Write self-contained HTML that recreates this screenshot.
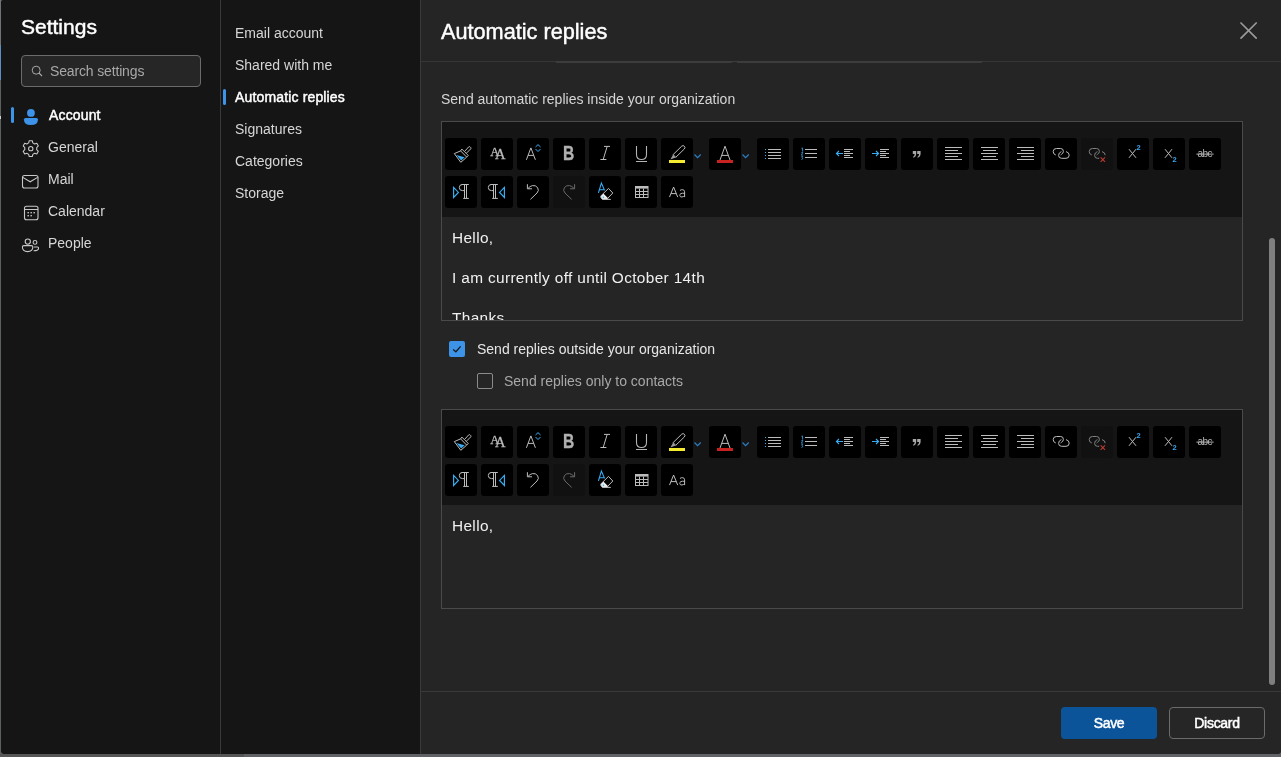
<!DOCTYPE html>
<html><head><meta charset="utf-8">
<style>
*{box-sizing:border-box;margin:0;padding:0}
html,body{width:1281px;height:757px;overflow:hidden;background:#5a5a5a;font-family:"Liberation Sans",sans-serif;}
.abs{position:absolute}
svg{position:absolute;left:0;top:0;display:block}
#dlg{will-change:transform;position:absolute;left:1px;top:0;width:1280px;height:754px;background:#151515;border-radius:3px 0 4px 4px;overflow:hidden}
#nav1{position:absolute;left:0;top:0;width:219px;height:754px;background:#151515}
#div1{position:absolute;left:219px;top:0;width:1px;height:754px;background:#3a3a3a}
#nav2{position:absolute;left:220px;top:0;width:199px;height:754px;background:#151515}
#div2{position:absolute;left:419px;top:0;width:1px;height:754px;background:#3a3a3a}
#content{position:absolute;left:420px;top:0;width:860px;height:754px;background:#252525}
.t{position:absolute;white-space:nowrap;line-height:1}
.sb{-webkit-text-stroke:0.45px currentColor}
.lt{position:absolute;white-space:nowrap;line-height:1}
.nv{position:absolute;white-space:nowrap;line-height:1;font-size:14px;color:#d6d6d6}
.nico{position:absolute}
.ed{position:absolute;left:20px;width:802px;height:200px;border:1px solid #4a4a4a;background:#252525;overflow:hidden}
.tb{position:absolute;left:0;top:0;width:800px;height:95px;background:#151515}
.btn{position:absolute;width:32px;height:32px;background:#000;border-radius:3px;overflow:hidden}
.btn.dis{background:#111}
.chev{position:absolute;width:8px;height:6px}
.body{position:absolute;left:10px;font-size:15.4px;letter-spacing:0.35px;color:#f0f0f0;white-space:nowrap;line-height:1}
.cb{position:absolute;width:16px;height:16px;border-radius:2px}
.btnf{position:absolute;top:707px;width:96px;height:32px;border-radius:4px;font-size:14px;-webkit-text-stroke:0.5px currentColor;letter-spacing:-0.3px;color:#fff;text-align:center;line-height:32px}
</style></head><body>
<div class="abs" style="left:0;top:0;width:1px;height:757px;background:#5c5e60"></div><div class="abs" style="left:0;top:0;width:1px;height:45px;background:#6f7377"></div>
<div class="abs" style="left:0;top:45px;width:1px;height:35px;background:#5a8fc2"></div>
<div class="abs" style="left:0;top:116px;width:1px;height:3px;background:#d0d0d0"></div>
<div class="abs" style="left:0;top:754px;width:244px;height:3px;background:#565656"></div>
<div class="abs" style="left:244px;top:754px;width:1037px;height:3px;background:#606265"></div>
<div id="dlg">
  <div id="nav1">
    <div class="t sb" style="left:20px;top:16px;font-size:21px;color:#fff">Settings</div>
    <div class="abs" style="left:20px;top:55px;width:180px;height:32px;border:1px solid #6b6b6b;border-radius:4px;background:#262626"></div>
    <svg class="nico" style="left:29.5px;top:64.7px" width="12" height="12" viewBox="0 0 12 12"><circle cx="5.2" cy="5.2" r="4" fill="none" stroke="#a8a8a8" stroke-width="1"/><path d="M8 8 L11 11" stroke="#a8a8a8" stroke-width="1.1"/></svg>
    <div class="t" style="left:49px;top:64px;font-size:14px;letter-spacing:-0.15px;color:#a8a8a8">Search settings</div>
    <div class="abs" style="left:10px;top:107px;width:3px;height:16px;background:#3d93e8;border-radius:2px"></div>
    <svg class="nico" style="left:19.8px;top:108px" width="20" height="18" viewBox="0 0 20 18"><circle cx="9.95" cy="4.95" r="3.9" fill="#3d93e8"/><path d="M2.9 11.6 Q2.9 10 4.5 10 H15.4 Q17 10 17 11.6 Q17 17.1 9.95 17.1 Q2.9 17.1 2.9 11.6 Z" fill="#3d93e8"/></svg>
    <div class="t sb" style="left:48px;top:108px;font-size:14px;letter-spacing:0.15px;color:#fff">Account</div>
    <svg class="nico" style="left:19.5px;top:139px" width="19.5" height="19.5" viewBox="0 0 18 18"><path d="M7.6 1.6 H10.4 L10.9 3.6 L12.6 4.6 L14.6 4 L16 6.4 L14.5 7.9 V9.9 L16 11.4 L14.6 13.8 L12.6 13.2 L10.9 14.2 L10.4 16.2 H7.6 L7.1 14.2 L5.4 13.2 L3.4 13.8 L2 11.4 L3.5 9.9 V7.9 L2 6.4 L3.4 4 L5.4 4.6 L7.1 3.6 Z" fill="none" stroke="#c8c8c8" stroke-width="1" stroke-linejoin="round"/><circle cx="9" cy="8.9" r="2" fill="none" stroke="#c8c8c8" stroke-width="1"/></svg>
    <div class="nv" style="left:47px;top:140px">General</div>
    <svg class="nico" style="left:20px;top:174px" width="18" height="15" viewBox="0 0 18 15"><rect x="1.5" y="1.5" width="15.5" height="12.5" rx="2" fill="none" stroke="#c8c8c8" stroke-width="1.1"/><path d="M1.8 3.4 L9.2 7.8 L16.6 3.4" fill="none" stroke="#c8c8c8" stroke-width="1.1"/></svg>
    <div class="nv" style="left:47px;top:172px">Mail</div>
    <svg class="nico" style="left:21.6px;top:205px" width="16" height="16" viewBox="0 0 16 16"><rect x="1.5" y="1.3" width="13.5" height="13.5" rx="2" fill="none" stroke="#c8c8c8" stroke-width="1.1"/><rect x="1.5" y="4" width="13.5" height="1" fill="#c8c8c8"/><g fill="#c8c8c8"><rect x="4.5" y="7" width="1.4" height="1.4"/><rect x="7.5" y="7" width="1.4" height="1.4"/><rect x="10.5" y="7" width="1.4" height="1.4"/><rect x="4.5" y="10" width="1.4" height="1.4"/><rect x="7.5" y="10" width="1.4" height="1.4"/></g></svg>
    <div class="nv" style="left:47px;top:204px">Calendar</div>
    <svg class="nico" style="left:20px;top:237px" width="19" height="16" viewBox="0 0 19 16"><circle cx="6.8" cy="4.6" r="2.6" fill="none" stroke="#c8c8c8" stroke-width="1.1"/><circle cx="14" cy="5.4" r="1.9" fill="none" stroke="#c8c8c8" stroke-width="1.1"/><path d="M1.4 10 Q1.4 8.6 2.8 8.6 H10.4 Q11.8 8.6 11.8 10 Q11.8 14.6 6.6 14.6 Q1.4 14.6 1.4 10 Z" fill="none" stroke="#c8c8c8" stroke-width="1.1"/><path d="M12.6 13.8 Q17.6 13.8 17.6 11 Q17.6 10 16.6 10 H12.8" fill="none" stroke="#c8c8c8" stroke-width="1.1"/></svg>
    <div class="nv" style="left:47px;top:236px">People</div>
  </div>
  <div id="div1"></div>
  <div id="nav2">
    <div class="nv" style="left:14px;top:26px">Email account</div>
    <div class="nv" style="left:14px;top:58px">Shared with me</div>
    <div class="abs" style="left:2px;top:89px;width:3px;height:16px;background:#3d93e8;border-radius:2px"></div>
    <div class="t sb" style="left:14px;top:90px;font-size:14px;letter-spacing:0.15px;color:#fff">Automatic replies</div>
    <div class="nv" style="left:14px;top:122px">Signatures</div>
    <div class="nv" style="left:14px;top:154px">Categories</div>
    <div class="nv" style="left:14px;top:186px">Storage</div>
  </div>
  <div id="div2"></div>
  <div id="content">
    <div class="t sb" style="left:20px;top:21px;font-size:21.7px;color:#fff">Automatic replies</div>
    <svg class="nico" style="left:817px;top:19.5px" width="20" height="20" viewBox="0 0 20 20"><path d="M3 3 L18.2 18.2 M18.2 3 L3 18.2" stroke="#9a9a9a" stroke-width="1.7" stroke-linecap="round"/></svg>
    <div class="abs" style="left:0;top:61px;width:860px;height:1px;background:#363636"></div><div class="abs" style="left:135px;top:61px;width:426px;height:2px;background:#3c3c3c"></div><div class="abs" style="left:311px;top:62px;width:5px;height:1px;background:#262626"></div>
    <div class="t" style="left:20px;top:92px;font-size:14px;color:#d6d6d6">Send automatic replies inside your organization</div>

    <div class="ed" style="top:121px">
      <div class="tb"><div class="btn" style="left:3px;top:16px"><svg width="32" height="32" viewBox="0 0 32 32">
<g fill="none" stroke="#bcbcbc" stroke-width="1" stroke-linejoin="round">
<path d="M19.6 13.4 L23.7 8.9 Q24.4 8.3 25.1 8.9 L25.7 9.5 Q26.3 10.2 25.7 10.9 L21.4 15.2"/>
<path d="M15.6 12.9 L16.9 11.1 L23.2 17.4 L21.7 19.1 Z"/>
<path d="M15.6 12.9 L9.3 15.6 L15.8 24.3 L21.7 19.1"/>
</g>
<path d="M11.3 17.1 L19.6 19.3 L16.2 22.4 Z" fill="#38abf2"/>
</svg></div><div class="btn" style="left:39px;top:16px"><span class="lt" style="left:9.2px;top:7.6px;font-size:12.5px;font-family:'Liberation Serif',serif;color:#bcbcbc;-webkit-text-stroke:0.3px #bcbcbc">A</span><span class="lt" style="left:13.9px;top:9.4px;font-size:14.6px;font-family:'Liberation Serif',serif;color:#bcbcbc;-webkit-text-stroke:0.3px #bcbcbc">A</span></div><div class="btn" style="left:75px;top:16px"><svg width="32" height="32" viewBox="0 0 32 32"><path d="M9.4 21.8 L13.9 9.9 L18.4 21.8 M11.1 17.4 H16.7" fill="none" stroke="#bcbcbc" stroke-width="1"/><path d="M18.5 9 L21 6.6 L23.5 9 M18.5 11 L21 13.5 L23.5 11" fill="none" stroke="#38abf2" stroke-width="1"/></svg></div><div class="btn" style="left:111px;top:16px"><span class="lt" style="left:10.4px;top:6.2px;font-size:19.5px;font-weight:bold;color:#b0b0b0;-webkit-text-stroke:0.35px #b0b0b0;transform:scaleX(0.8);transform-origin:left top">B</span></div><div class="btn" style="left:147px;top:16px"><svg width="32" height="32" viewBox="0 0 32 32"><path d="M15 8.4 H21 M11.4 21.5 H17.4 M18.2 8.4 L14.2 21.5" fill="none" stroke="#bcbcbc" stroke-width="1"/></svg></div><div class="btn" style="left:183px;top:16px"><svg width="32" height="32" viewBox="0 0 32 32"><path d="M11.5 8 V16.5 Q11.5 21.5 16.5 21.5 Q21.5 21.5 21.5 16.5 V8" fill="none" stroke="#b4b4b4" stroke-width="1.1"/><rect x="11" y="23" width="11" height="1" fill="#b4b4b4"/></svg></div><div class="btn" style="left:219px;top:16px"><svg width="32" height="32" viewBox="0 0 32 32">
<path d="M12.1 16.6 L20.7 8.2 A1.9 1.9 0 0 1 23.3 11 L14.7 19.4 Z" fill="none" stroke="#bcbcbc" stroke-width="1"/>
<path d="M12.1 16.6 L9.4 21.4 L14.7 19.4 Z" fill="#9a9a9a"/>
<rect x="8" y="22" width="16" height="3" fill="#f5ec2f"/>
</svg></div><div class="chev" style="left:252px;top:31.7px"><svg width="8" height="6" viewBox="0 0 8 6"><path d="M0.5 0.5 L3.6 3.6 L6.7 0.5" fill="none" stroke="#2f80c8" stroke-width="1.1"/></svg></div><div class="btn" style="left:267px;top:16px"><svg width="32" height="32" viewBox="0 0 32 32"><path d="M11 22 L16 8.2 L21 22 M12.6 17.4 H19.4" fill="none" stroke="#bcbcbc" stroke-width="1"/><rect x="8" y="22" width="16" height="3" fill="#c8221e"/></svg></div><div class="chev" style="left:300px;top:31.7px"><svg width="8" height="6" viewBox="0 0 8 6"><path d="M0.5 0.5 L3.6 3.6 L6.7 0.5" fill="none" stroke="#2f80c8" stroke-width="1.1"/></svg></div><div class="btn" style="left:315px;top:16px"><svg width="32" height="32" viewBox="0 0 32 32"><rect x="8" y="11" width="1" height="1" fill="#38abf2"/><rect x="8" y="14" width="1" height="1" fill="#38abf2"/><rect x="8" y="17" width="1" height="1" fill="#38abf2"/><rect x="8" y="20" width="1" height="1" fill="#38abf2"/><rect x="11" y="11" width="13" height="1" fill="#bcbcbc"/><rect x="11" y="14" width="13" height="1" fill="#bcbcbc"/><rect x="11" y="17" width="13" height="1" fill="#bcbcbc"/><rect x="11" y="20" width="13" height="1" fill="#bcbcbc"/></svg></div><div class="btn" style="left:351px;top:16px"><svg width="32" height="32" viewBox="0 0 32 32"><path d="M8.4 10.3 L9.6 10 V13.5 M8.4 14.4 H9.8 L8.4 17.2 H9.8 M8.4 18.6 H9.8 L9 19.8 L9.8 20.6 L8.4 21.6" fill="none" stroke="#38abf2" stroke-width="0.8"/><rect x="12" y="11" width="12" height="1" fill="#bcbcbc"/><rect x="12" y="15" width="12" height="1" fill="#bcbcbc"/><rect x="12" y="19" width="12" height="1" fill="#bcbcbc"/></svg></div><div class="btn" style="left:387px;top:16px"><svg width="32" height="32" viewBox="0 0 32 32"><path d="M14 15.5 H7.6 M10 13 L7.4 15.5 L10 18" fill="none" stroke="#38abf2" stroke-width="1.1"/><rect x="15" y="11" width="9" height="1" fill="#bcbcbc"/><rect x="15" y="13" width="6" height="1" fill="#bcbcbc"/><rect x="15" y="15" width="9" height="1" fill="#bcbcbc"/><rect x="15" y="17" width="6" height="1" fill="#bcbcbc"/><rect x="15" y="19" width="9" height="1" fill="#bcbcbc"/></svg></div><div class="btn" style="left:423px;top:16px"><svg width="32" height="32" viewBox="0 0 32 32"><path d="M7 15.5 H13.4 M11 13 L13.6 15.5 L11 18" fill="none" stroke="#38abf2" stroke-width="1.1"/><rect x="15" y="11" width="9" height="1" fill="#bcbcbc"/><rect x="15" y="13" width="6" height="1" fill="#bcbcbc"/><rect x="15" y="15" width="9" height="1" fill="#bcbcbc"/><rect x="15" y="17" width="6" height="1" fill="#bcbcbc"/><rect x="15" y="19" width="9" height="1" fill="#bcbcbc"/></svg></div><div class="btn" style="left:459px;top:16px"><svg width="32" height="32" viewBox="0 0 32 32"><path d="M11.8 12.9 H15.2 V15.4 Q15.2 18.6 12.4 19.7 L12 18.9 Q13.6 18 13.7 16.1 H11.8 Z M16.200000000000003 12.9 H19.6 V15.4 Q19.6 18.6 16.8 19.7 L16.4 18.9 Q18.0 18 18.1 16.1 H16.200000000000003 Z" fill="#a8a8a8"/></svg></div><div class="btn" style="left:495px;top:16px"><svg width="32" height="32" viewBox="0 0 32 32"><rect x="8" y="9" width="17" height="1" fill="#bcbcbc"/><rect x="8" y="12" width="13" height="1" fill="#bcbcbc"/><rect x="8" y="15" width="17" height="1" fill="#bcbcbc"/><rect x="8" y="18" width="13" height="1" fill="#bcbcbc"/><rect x="8" y="21" width="17" height="1" fill="#bcbcbc"/></svg></div><div class="btn" style="left:531px;top:16px"><svg width="32" height="32" viewBox="0 0 32 32"><rect x="8" y="9" width="17" height="1" fill="#bcbcbc"/><rect x="10" y="12" width="13" height="1" fill="#bcbcbc"/><rect x="8" y="15" width="17" height="1" fill="#bcbcbc"/><rect x="10" y="18" width="13" height="1" fill="#bcbcbc"/><rect x="8" y="21" width="17" height="1" fill="#bcbcbc"/></svg></div><div class="btn" style="left:567px;top:16px"><svg width="32" height="32" viewBox="0 0 32 32"><rect x="8" y="9" width="17" height="1" fill="#bcbcbc"/><rect x="12" y="12" width="13" height="1" fill="#bcbcbc"/><rect x="8" y="15" width="17" height="1" fill="#bcbcbc"/><rect x="12" y="18" width="13" height="1" fill="#bcbcbc"/><rect x="8" y="21" width="17" height="1" fill="#bcbcbc"/></svg></div><div class="btn" style="left:603px;top:16px"><svg width="32" height="32" viewBox="0 0 32 32"><path d="M10.8 17 Q8.2 16.2 8.2 13.6 Q8.2 10.5 11.4 10.5 H15.6 Q18.4 10.5 18.4 13.4 Q18.4 15.2 16.6 16.2 L15.6 17 M16.4 13.6 Q13.6 14.6 13.6 17.4 Q13.6 20.3 16.6 20.3 H21 Q24.2 20.3 24.2 17.2 Q24.2 14.4 21 13.6" fill="none" stroke="#bcbcbc" stroke-width="1"/></svg></div><div class="btn dis" style="left:639px;top:16px"><svg width="32" height="32" viewBox="0 0 32 32"><path d="M10.8 17 Q8.2 16.2 8.2 13.6 Q8.2 10.5 11.4 10.5 H15.6 Q18.4 10.5 18.4 13.4 Q18.4 15.2 16.6 16.2 L15.6 17 M16.4 13.6 Q13.6 14.6 13.6 17.4 Q13.6 20.3 16.6 20.3 H18.2 M24.2 17.2 Q24.2 14.4 21 13.6" fill="none" stroke="#808080" stroke-width="1"/><path d="M19.6 19.4 L24 23.8 M24 19.4 L19.6 23.8" stroke="#b83a30" stroke-width="1.2"/></svg></div><div class="btn" style="left:675px;top:16px"><svg width="32" height="32" viewBox="0 0 32 32"><path d="M12 11.2 L19 19.8 M19 11.2 L12 19.8" stroke="#bcbcbc" stroke-width="1"/></svg><span class="lt" style="left:19.5px;top:5.6px;font-size:7.5px;font-weight:bold;color:#38abf2">2</span></div><div class="btn" style="left:711px;top:16px"><svg width="32" height="32" viewBox="0 0 32 32"><path d="M12 11.2 L19 19.8 M19 11.2 L12 19.8" stroke="#bcbcbc" stroke-width="1"/></svg><span class="lt" style="left:19.5px;top:18px;font-size:7.5px;font-weight:bold;color:#38abf2">2</span></div><div class="btn" style="left:747px;top:16px"><span class="lt" style="left:8.5px;top:10.5px;font-size:10px;letter-spacing:-0.6px;color:#b4b4b4">abc</span><svg width="32" height="32" viewBox="0 0 32 32"><rect x="7.4" y="15.6" width="17.2" height="1" fill="#b4b4b4"/></svg></div><div class="btn" style="left:3px;top:54px"><svg width="32" height="32" viewBox="0 0 32 32"><path d="M8.6 11.4 L13.4 16.4 L8.6 21.4 Z" fill="none" stroke="#38abf2" stroke-width="1.2" stroke-linejoin="miter"/><path d="M19.5 8.5 H17.4 Q14.3 8.5 14.3 11.5 Q14.3 14.6 17.4 14.6 H19.5 M16.4 8.5 H23.8 M19.5 8.5 V22.4 M21.5 8.5 V22.4 M18.2 22.4 H23.8" fill="none" stroke="#bcbcbc" stroke-width="1"/></svg></div><div class="btn" style="left:39px;top:54px"><svg width="32" height="32" viewBox="0 0 32 32"><path d="M12.5 8.5 H10.399999999999999 Q7.300000000000001 8.5 7.300000000000001 11.5 Q7.300000000000001 14.6 10.399999999999999 14.6 H12.5 M9.399999999999999 8.5 H16.8 M12.5 8.5 V22.4 M14.5 8.5 V22.4 M11.2 22.4 H16.8" fill="none" stroke="#bcbcbc" stroke-width="1"/><path d="M23.4 11.4 L18.6 16.4 L23.4 21.4 Z" fill="none" stroke="#38abf2" stroke-width="1.2"/></svg></div><div class="btn" style="left:75px;top:54px"><svg width="32" height="32" viewBox="0 0 32 32"><path d="M13.4 23.4 L20 17 Q22.4 14.6 20.6 11.6 Q18.6 9 15.4 9.6 Q13 10.2 11 12.4 M10.4 8.2 V12.8 H15" fill="none" stroke="#bcbcbc" stroke-width="1"/></svg></div><div class="btn dis" style="left:111px;top:54px"><svg width="32" height="32" viewBox="0 0 32 32"><path d="M18.6 23.4 L12 17 Q9.6 14.6 11.4 11.6 Q13.4 9 16.6 9.6 Q19 10.2 21 12.4 M21.6 8.2 V12.8 H17" fill="none" stroke="#6a6a6a" stroke-width="1"/></svg></div><div class="btn" style="left:147px;top:54px"><svg width="32" height="32" viewBox="0 0 32 32">
<path d="M9.4 16.8 L12.4 7 L15.6 14.4 M10.4 13.6 Q12.6 13.6 15.8 13.8" fill="none" stroke="#38abf2" stroke-width="1.1"/>
<path d="M14.4 17.4 L19.4 22.4 L18.4 23.4 H13.4 L12.2 22 Q11.2 20.8 12.2 19.6 Z" fill="#ededed"/>
<path d="M19.5 12.4 L23.8 17 L17.9 23.2 M19.5 12.4 L12.2 19.6 Q11.2 20.8 12.2 22 L13.4 23.4 H21.8" fill="none" stroke="#bcbcbc" stroke-width="1"/>
<circle cx="14.4" cy="21.3" r="0.8" fill="#38abf2"/>
</svg></div><div class="btn" style="left:183px;top:54px"><svg width="32" height="32" viewBox="0 0 32 32"><rect x="10.5" y="10.5" width="12.5" height="11" fill="none" stroke="#bcbcbc" stroke-width="1"/><rect x="10.5" y="11" width="12.5" height="1.6" fill="#bcbcbc"/><path d="M10.5 15.5 H23 M10.5 18.5 H23 M14.5 12.5 V21.5 M18.5 12.5 V21.5" stroke="#bcbcbc" stroke-width="1"/></svg></div><div class="btn" style="left:219px;top:54px"><svg width="32" height="32" viewBox="0 0 32 32"><path d="M8.5 21.1 L12.6 11 L16.7 21.1 M10 17.6 H15.2" fill="none" stroke="#bcbcbc" stroke-width="1"/><path d="M19 14.4 Q20.4 13.5 21.8 13.7 Q23.6 14 23.6 15.8 V21.1 M23.6 17.4 Q21.4 16.9 19.9 17.6 Q18.6 18.2 18.8 19.6 Q19.1 21.2 21 21 Q22.8 20.8 23.6 19.4" fill="none" stroke="#bcbcbc" stroke-width="1"/></svg></div></div>
      <div class="body" style="top:108px">Hello,</div>
      <div class="body" style="top:148px">I am currently off until October 14th</div>
      <div class="body" style="top:188px">Thanks</div>
    </div>

    <div class="cb" style="left:28px;top:341px;background:#3d93e8"><svg width="16" height="16" viewBox="0 0 16 16"><path d="M4.2 8.4 L6.9 10.8 L11.6 5.4" fill="none" stroke="#1a1a1a" stroke-width="1.3"/></svg></div>
    <div class="t" style="left:56px;top:342px;font-size:14px;color:#e6e6e6">Send replies outside your organization</div>
    <div class="cb" style="left:56px;top:373px;border:1px solid #8a8a8a"></div>
    <div class="t" style="left:83px;top:374px;font-size:14px;color:#a8a8a8">Send replies only to contacts</div>

    <div class="ed" style="top:409px">
      <div class="tb"><div class="btn" style="left:3px;top:16px"><svg width="32" height="32" viewBox="0 0 32 32">
<g fill="none" stroke="#bcbcbc" stroke-width="1" stroke-linejoin="round">
<path d="M19.6 13.4 L23.7 8.9 Q24.4 8.3 25.1 8.9 L25.7 9.5 Q26.3 10.2 25.7 10.9 L21.4 15.2"/>
<path d="M15.6 12.9 L16.9 11.1 L23.2 17.4 L21.7 19.1 Z"/>
<path d="M15.6 12.9 L9.3 15.6 L15.8 24.3 L21.7 19.1"/>
</g>
<path d="M11.3 17.1 L19.6 19.3 L16.2 22.4 Z" fill="#38abf2"/>
</svg></div><div class="btn" style="left:39px;top:16px"><span class="lt" style="left:9.2px;top:7.6px;font-size:12.5px;font-family:'Liberation Serif',serif;color:#bcbcbc;-webkit-text-stroke:0.3px #bcbcbc">A</span><span class="lt" style="left:13.9px;top:9.4px;font-size:14.6px;font-family:'Liberation Serif',serif;color:#bcbcbc;-webkit-text-stroke:0.3px #bcbcbc">A</span></div><div class="btn" style="left:75px;top:16px"><svg width="32" height="32" viewBox="0 0 32 32"><path d="M9.4 21.8 L13.9 9.9 L18.4 21.8 M11.1 17.4 H16.7" fill="none" stroke="#bcbcbc" stroke-width="1"/><path d="M18.5 9 L21 6.6 L23.5 9 M18.5 11 L21 13.5 L23.5 11" fill="none" stroke="#38abf2" stroke-width="1"/></svg></div><div class="btn" style="left:111px;top:16px"><span class="lt" style="left:10.4px;top:6.2px;font-size:19.5px;font-weight:bold;color:#b0b0b0;-webkit-text-stroke:0.35px #b0b0b0;transform:scaleX(0.8);transform-origin:left top">B</span></div><div class="btn" style="left:147px;top:16px"><svg width="32" height="32" viewBox="0 0 32 32"><path d="M15 8.4 H21 M11.4 21.5 H17.4 M18.2 8.4 L14.2 21.5" fill="none" stroke="#bcbcbc" stroke-width="1"/></svg></div><div class="btn" style="left:183px;top:16px"><svg width="32" height="32" viewBox="0 0 32 32"><path d="M11.5 8 V16.5 Q11.5 21.5 16.5 21.5 Q21.5 21.5 21.5 16.5 V8" fill="none" stroke="#b4b4b4" stroke-width="1.1"/><rect x="11" y="23" width="11" height="1" fill="#b4b4b4"/></svg></div><div class="btn" style="left:219px;top:16px"><svg width="32" height="32" viewBox="0 0 32 32">
<path d="M12.1 16.6 L20.7 8.2 A1.9 1.9 0 0 1 23.3 11 L14.7 19.4 Z" fill="none" stroke="#bcbcbc" stroke-width="1"/>
<path d="M12.1 16.6 L9.4 21.4 L14.7 19.4 Z" fill="#9a9a9a"/>
<rect x="8" y="22" width="16" height="3" fill="#f5ec2f"/>
</svg></div><div class="chev" style="left:252px;top:31.7px"><svg width="8" height="6" viewBox="0 0 8 6"><path d="M0.5 0.5 L3.6 3.6 L6.7 0.5" fill="none" stroke="#2f80c8" stroke-width="1.1"/></svg></div><div class="btn" style="left:267px;top:16px"><svg width="32" height="32" viewBox="0 0 32 32"><path d="M11 22 L16 8.2 L21 22 M12.6 17.4 H19.4" fill="none" stroke="#bcbcbc" stroke-width="1"/><rect x="8" y="22" width="16" height="3" fill="#c8221e"/></svg></div><div class="chev" style="left:300px;top:31.7px"><svg width="8" height="6" viewBox="0 0 8 6"><path d="M0.5 0.5 L3.6 3.6 L6.7 0.5" fill="none" stroke="#2f80c8" stroke-width="1.1"/></svg></div><div class="btn" style="left:315px;top:16px"><svg width="32" height="32" viewBox="0 0 32 32"><rect x="8" y="11" width="1" height="1" fill="#38abf2"/><rect x="8" y="14" width="1" height="1" fill="#38abf2"/><rect x="8" y="17" width="1" height="1" fill="#38abf2"/><rect x="8" y="20" width="1" height="1" fill="#38abf2"/><rect x="11" y="11" width="13" height="1" fill="#bcbcbc"/><rect x="11" y="14" width="13" height="1" fill="#bcbcbc"/><rect x="11" y="17" width="13" height="1" fill="#bcbcbc"/><rect x="11" y="20" width="13" height="1" fill="#bcbcbc"/></svg></div><div class="btn" style="left:351px;top:16px"><svg width="32" height="32" viewBox="0 0 32 32"><path d="M8.4 10.3 L9.6 10 V13.5 M8.4 14.4 H9.8 L8.4 17.2 H9.8 M8.4 18.6 H9.8 L9 19.8 L9.8 20.6 L8.4 21.6" fill="none" stroke="#38abf2" stroke-width="0.8"/><rect x="12" y="11" width="12" height="1" fill="#bcbcbc"/><rect x="12" y="15" width="12" height="1" fill="#bcbcbc"/><rect x="12" y="19" width="12" height="1" fill="#bcbcbc"/></svg></div><div class="btn" style="left:387px;top:16px"><svg width="32" height="32" viewBox="0 0 32 32"><path d="M14 15.5 H7.6 M10 13 L7.4 15.5 L10 18" fill="none" stroke="#38abf2" stroke-width="1.1"/><rect x="15" y="11" width="9" height="1" fill="#bcbcbc"/><rect x="15" y="13" width="6" height="1" fill="#bcbcbc"/><rect x="15" y="15" width="9" height="1" fill="#bcbcbc"/><rect x="15" y="17" width="6" height="1" fill="#bcbcbc"/><rect x="15" y="19" width="9" height="1" fill="#bcbcbc"/></svg></div><div class="btn" style="left:423px;top:16px"><svg width="32" height="32" viewBox="0 0 32 32"><path d="M7 15.5 H13.4 M11 13 L13.6 15.5 L11 18" fill="none" stroke="#38abf2" stroke-width="1.1"/><rect x="15" y="11" width="9" height="1" fill="#bcbcbc"/><rect x="15" y="13" width="6" height="1" fill="#bcbcbc"/><rect x="15" y="15" width="9" height="1" fill="#bcbcbc"/><rect x="15" y="17" width="6" height="1" fill="#bcbcbc"/><rect x="15" y="19" width="9" height="1" fill="#bcbcbc"/></svg></div><div class="btn" style="left:459px;top:16px"><svg width="32" height="32" viewBox="0 0 32 32"><path d="M11.8 12.9 H15.2 V15.4 Q15.2 18.6 12.4 19.7 L12 18.9 Q13.6 18 13.7 16.1 H11.8 Z M16.200000000000003 12.9 H19.6 V15.4 Q19.6 18.6 16.8 19.7 L16.4 18.9 Q18.0 18 18.1 16.1 H16.200000000000003 Z" fill="#a8a8a8"/></svg></div><div class="btn" style="left:495px;top:16px"><svg width="32" height="32" viewBox="0 0 32 32"><rect x="8" y="9" width="17" height="1" fill="#bcbcbc"/><rect x="8" y="12" width="13" height="1" fill="#bcbcbc"/><rect x="8" y="15" width="17" height="1" fill="#bcbcbc"/><rect x="8" y="18" width="13" height="1" fill="#bcbcbc"/><rect x="8" y="21" width="17" height="1" fill="#bcbcbc"/></svg></div><div class="btn" style="left:531px;top:16px"><svg width="32" height="32" viewBox="0 0 32 32"><rect x="8" y="9" width="17" height="1" fill="#bcbcbc"/><rect x="10" y="12" width="13" height="1" fill="#bcbcbc"/><rect x="8" y="15" width="17" height="1" fill="#bcbcbc"/><rect x="10" y="18" width="13" height="1" fill="#bcbcbc"/><rect x="8" y="21" width="17" height="1" fill="#bcbcbc"/></svg></div><div class="btn" style="left:567px;top:16px"><svg width="32" height="32" viewBox="0 0 32 32"><rect x="8" y="9" width="17" height="1" fill="#bcbcbc"/><rect x="12" y="12" width="13" height="1" fill="#bcbcbc"/><rect x="8" y="15" width="17" height="1" fill="#bcbcbc"/><rect x="12" y="18" width="13" height="1" fill="#bcbcbc"/><rect x="8" y="21" width="17" height="1" fill="#bcbcbc"/></svg></div><div class="btn" style="left:603px;top:16px"><svg width="32" height="32" viewBox="0 0 32 32"><path d="M10.8 17 Q8.2 16.2 8.2 13.6 Q8.2 10.5 11.4 10.5 H15.6 Q18.4 10.5 18.4 13.4 Q18.4 15.2 16.6 16.2 L15.6 17 M16.4 13.6 Q13.6 14.6 13.6 17.4 Q13.6 20.3 16.6 20.3 H21 Q24.2 20.3 24.2 17.2 Q24.2 14.4 21 13.6" fill="none" stroke="#bcbcbc" stroke-width="1"/></svg></div><div class="btn dis" style="left:639px;top:16px"><svg width="32" height="32" viewBox="0 0 32 32"><path d="M10.8 17 Q8.2 16.2 8.2 13.6 Q8.2 10.5 11.4 10.5 H15.6 Q18.4 10.5 18.4 13.4 Q18.4 15.2 16.6 16.2 L15.6 17 M16.4 13.6 Q13.6 14.6 13.6 17.4 Q13.6 20.3 16.6 20.3 H18.2 M24.2 17.2 Q24.2 14.4 21 13.6" fill="none" stroke="#808080" stroke-width="1"/><path d="M19.6 19.4 L24 23.8 M24 19.4 L19.6 23.8" stroke="#b83a30" stroke-width="1.2"/></svg></div><div class="btn" style="left:675px;top:16px"><svg width="32" height="32" viewBox="0 0 32 32"><path d="M12 11.2 L19 19.8 M19 11.2 L12 19.8" stroke="#bcbcbc" stroke-width="1"/></svg><span class="lt" style="left:19.5px;top:5.6px;font-size:7.5px;font-weight:bold;color:#38abf2">2</span></div><div class="btn" style="left:711px;top:16px"><svg width="32" height="32" viewBox="0 0 32 32"><path d="M12 11.2 L19 19.8 M19 11.2 L12 19.8" stroke="#bcbcbc" stroke-width="1"/></svg><span class="lt" style="left:19.5px;top:18px;font-size:7.5px;font-weight:bold;color:#38abf2">2</span></div><div class="btn" style="left:747px;top:16px"><span class="lt" style="left:8.5px;top:10.5px;font-size:10px;letter-spacing:-0.6px;color:#b4b4b4">abc</span><svg width="32" height="32" viewBox="0 0 32 32"><rect x="7.4" y="15.6" width="17.2" height="1" fill="#b4b4b4"/></svg></div><div class="btn" style="left:3px;top:54px"><svg width="32" height="32" viewBox="0 0 32 32"><path d="M8.6 11.4 L13.4 16.4 L8.6 21.4 Z" fill="none" stroke="#38abf2" stroke-width="1.2" stroke-linejoin="miter"/><path d="M19.5 8.5 H17.4 Q14.3 8.5 14.3 11.5 Q14.3 14.6 17.4 14.6 H19.5 M16.4 8.5 H23.8 M19.5 8.5 V22.4 M21.5 8.5 V22.4 M18.2 22.4 H23.8" fill="none" stroke="#bcbcbc" stroke-width="1"/></svg></div><div class="btn" style="left:39px;top:54px"><svg width="32" height="32" viewBox="0 0 32 32"><path d="M12.5 8.5 H10.399999999999999 Q7.300000000000001 8.5 7.300000000000001 11.5 Q7.300000000000001 14.6 10.399999999999999 14.6 H12.5 M9.399999999999999 8.5 H16.8 M12.5 8.5 V22.4 M14.5 8.5 V22.4 M11.2 22.4 H16.8" fill="none" stroke="#bcbcbc" stroke-width="1"/><path d="M23.4 11.4 L18.6 16.4 L23.4 21.4 Z" fill="none" stroke="#38abf2" stroke-width="1.2"/></svg></div><div class="btn" style="left:75px;top:54px"><svg width="32" height="32" viewBox="0 0 32 32"><path d="M13.4 23.4 L20 17 Q22.4 14.6 20.6 11.6 Q18.6 9 15.4 9.6 Q13 10.2 11 12.4 M10.4 8.2 V12.8 H15" fill="none" stroke="#bcbcbc" stroke-width="1"/></svg></div><div class="btn dis" style="left:111px;top:54px"><svg width="32" height="32" viewBox="0 0 32 32"><path d="M18.6 23.4 L12 17 Q9.6 14.6 11.4 11.6 Q13.4 9 16.6 9.6 Q19 10.2 21 12.4 M21.6 8.2 V12.8 H17" fill="none" stroke="#6a6a6a" stroke-width="1"/></svg></div><div class="btn" style="left:147px;top:54px"><svg width="32" height="32" viewBox="0 0 32 32">
<path d="M9.4 16.8 L12.4 7 L15.6 14.4 M10.4 13.6 Q12.6 13.6 15.8 13.8" fill="none" stroke="#38abf2" stroke-width="1.1"/>
<path d="M14.4 17.4 L19.4 22.4 L18.4 23.4 H13.4 L12.2 22 Q11.2 20.8 12.2 19.6 Z" fill="#ededed"/>
<path d="M19.5 12.4 L23.8 17 L17.9 23.2 M19.5 12.4 L12.2 19.6 Q11.2 20.8 12.2 22 L13.4 23.4 H21.8" fill="none" stroke="#bcbcbc" stroke-width="1"/>
<circle cx="14.4" cy="21.3" r="0.8" fill="#38abf2"/>
</svg></div><div class="btn" style="left:183px;top:54px"><svg width="32" height="32" viewBox="0 0 32 32"><rect x="10.5" y="10.5" width="12.5" height="11" fill="none" stroke="#bcbcbc" stroke-width="1"/><rect x="10.5" y="11" width="12.5" height="1.6" fill="#bcbcbc"/><path d="M10.5 15.5 H23 M10.5 18.5 H23 M14.5 12.5 V21.5 M18.5 12.5 V21.5" stroke="#bcbcbc" stroke-width="1"/></svg></div><div class="btn" style="left:219px;top:54px"><svg width="32" height="32" viewBox="0 0 32 32"><path d="M8.5 21.1 L12.6 11 L16.7 21.1 M10 17.6 H15.2" fill="none" stroke="#bcbcbc" stroke-width="1"/><path d="M19 14.4 Q20.4 13.5 21.8 13.7 Q23.6 14 23.6 15.8 V21.1 M23.6 17.4 Q21.4 16.9 19.9 17.6 Q18.6 18.2 18.8 19.6 Q19.1 21.2 21 21 Q22.8 20.8 23.6 19.4" fill="none" stroke="#bcbcbc" stroke-width="1"/></svg></div></div>
      <div class="body" style="top:108px">Hello,</div>
    </div>

    <div class="abs" style="left:848px;top:238px;width:6px;height:447px;border-radius:3px;background:#7f7f7f"></div>
    <div class="abs" style="left:0;top:691px;width:860px;height:1px;background:#3a3a3a"></div>
    <div class="btnf" style="left:640px;background:#0c5499">Save</div>
    <div class="btnf" style="left:748px;border:1px solid #6b6b6b;line-height:30px;background:#262626">Discard</div>
  </div>
</div>
</body></html>
